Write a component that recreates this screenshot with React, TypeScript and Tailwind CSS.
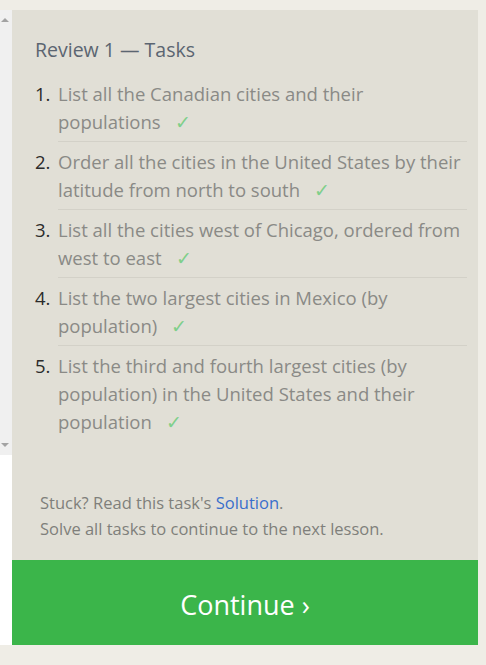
const tasks = [
  "List all the Canadian cities and their populations",
  "Order all the cities in the United States by their latitude from north to south",
  "List all the cities west of Chicago, ordered from west to east",
  "List the two largest cities in Mexico (by population)",
  "List the third and fourth largest cities (by population) in the United States and their population",
];

function ScrollStrip() {
  return (
    <div className="flex w-[12px] flex-col">
      <div className="relative h-[445px] bg-[#f0f0f0]">
        <span className="absolute left-[1px] top-[8px] h-0 w-0 border-x-[4px] border-b-[4px] border-x-transparent border-b-[#a3a3a3]" />
        <span className="absolute bottom-[8px] left-[1px] h-0 w-0 border-x-[4px] border-t-[4px] border-x-transparent border-t-[#a3a3a3]" />
      </div>
      <div className="h-[190px] bg-white" />
    </div>
  );
}

export default function App() {
  return (
    <div
      className="flex h-[665px] w-[486px] bg-[#efede6] pt-[10px]"
      style={{ fontFamily: '"Open Sans", "Noto Sans", sans-serif' }}
    >
      <ScrollStrip />
      <div className="flex h-[635px] w-[466px] flex-col bg-[#e1dfd6]">
        <div className="flex min-h-0 flex-1 flex-col pl-[23px] pr-[11px] pt-[26px]">
          <h2 className="text-[19.5px] leading-[28px] text-[#5b6571]">
            Review 1 — Tasks
          </h2>
          <ol className="mt-[10px]">
            {tasks.map((t, i) => (
              <li key={t} className="flex text-[18.5px] leading-[28px]">
                <span className="w-[23px] shrink-0 pt-[6px] text-[#2b2b2b]">
                  {i + 1}.
                </span>
                <span
                  className={`flex-1 pb-[5px] pt-[6px] text-[#8a8a86] ${
                    i < tasks.length - 1 ? "border-b border-[#d3d1c8]" : ""
                  }`}
                >
                  {t}
                  <span className="ml-[14px] text-[#7fcf8a]">✓</span>
                </span>
              </li>
            ))}
          </ol>
          <div className="mt-auto pb-[18px] pl-[5px] text-[16.5px] leading-[26px] text-[#7f7f7b]">
            <p>
              Stuck? Read this task's{" "}
              <span className="text-[#3a6fcc]">Solution</span>.
            </p>
            <p>Solve all tasks to continue to the next lesson.</p>
          </div>
        </div>
        <button className="flex h-[85px] w-full shrink-0 items-center justify-center bg-[#3bb54a] pt-[5px] text-[27px] text-white">
          Continue ›
        </button>
      </div>
    </div>
  );
}
